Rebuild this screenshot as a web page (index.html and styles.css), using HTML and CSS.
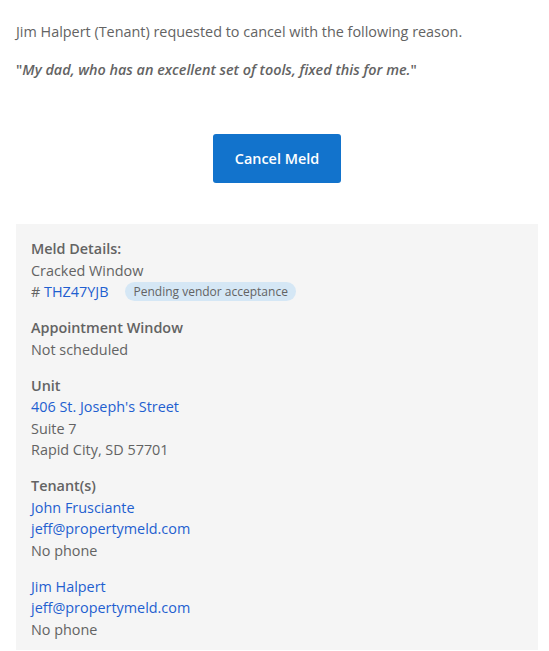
FILE: index.html
```html
<!DOCTYPE html>
<html>
<head>
<meta charset="utf-8">
<link rel="stylesheet" href="styles.css">
</head>
<body>
<div class="page">
  <p class="intro">Jim Halpert (Tenant) requested to cancel with the following reason.</p>
  <p class="reason">"<em>My dad, who has an excellent set of tools, fixed this for me.</em>"</p>
  <div class="actions">
    <button class="btn-primary">Cancel Meld</button>
  </div>
  <section class="details">
    <div class="group">
      <div class="label">Meld Details:</div>
      <div>Cracked Window</div>
      <div class="ref-row"><span># <a class="link" href="#">THZ47YJB</a></span><span class="badge">Pending vendor acceptance</span></div>
    </div>
    <div class="group">
      <div class="label">Appointment Window</div>
      <div>Not scheduled</div>
    </div>
    <div class="group">
      <div class="label">Unit</div>
      <div><a class="link" href="#">406 St. Joseph's Street</a></div>
      <div>Suite 7</div>
      <div>Rapid City, SD 57701</div>
    </div>
    <div class="group">
      <div class="label">Tenant(s)</div>
      <div><a class="link" href="#">John Frusciante</a></div>
      <div><a class="link" href="#">jeff@propertymeld.com</a></div>
      <div>No phone</div>
    </div>
    <div class="group">
      <div><a class="link" href="#">Jim Halpert</a></div>
      <div><a class="link" href="#">jeff@propertymeld.com</a></div>
      <div>No phone</div>
    </div>
  </section>
</div>
</body>
</html>
```
FILE: styles.css
```css
* { box-sizing: border-box; }
html, body { margin: 0; padding: 0; background: #ffffff; }
body {
  font-family: "Open Sans", "Liberation Sans", sans-serif;
  font-size: 14.4px;
  color: #636363;
}
.page {
  width: 522px;
  margin-left: 16px;
  padding-top: 21px;
}
.intro {
  margin: 0;
  line-height: 21.5px;
}
.reason {
  margin: 16px 0 0;
  line-height: 21.5px;
  font-weight: 600;
}
.reason em { font-style: italic; }
.actions {
  display: flex;
  justify-content: center;
  margin-top: 54px;
}
.btn-primary {
  width: 128px;
  height: 49px;
  border: none;
  border-radius: 3px;
  background: #1273cc;
  color: #ffffff;
  font-family: "Open Sans", "Liberation Sans", sans-serif;
  font-size: 14.4px;
  font-weight: 600;
  cursor: pointer;
}
.details {
  margin-top: 41px;
  background: #f5f5f5;
  padding: 14px 15px 10px;
  display: flex;
  flex-direction: column;
  gap: 14.5px;
  line-height: 21.5px;
}
.label { font-weight: 600; }
.link { color: #1f5fd0; text-decoration: none; }
.ref-row { display: flex; align-items: center; }
.badge {
  margin-left: 17px;
  background: #d5e7f5;
  border-radius: 10px;
  padding: 0 8px;
  font-size: 12px;
  line-height: 19px;
  color: #636363;
}
```
